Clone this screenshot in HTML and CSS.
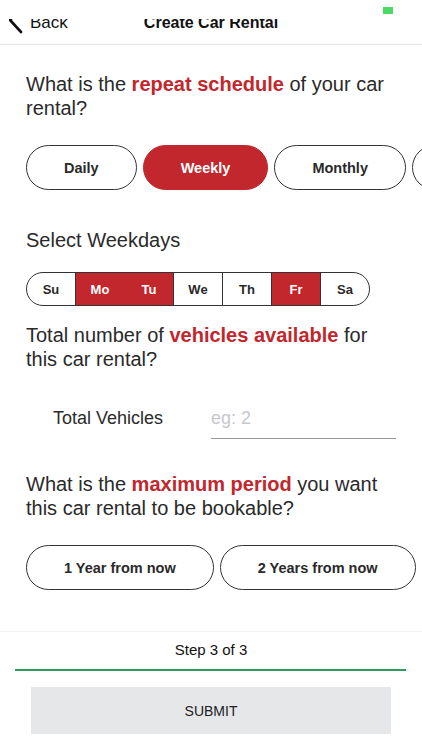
FILE: index.html
```html
<!DOCTYPE html>
<html lang="en">
  <head>
    <meta charset="utf-8" />
    <title>Create Car Rental</title>
    <link rel="stylesheet" href="styles.css">
  </head>

  <body>
    <!--Status strip, only the battery shows-->
    <div class="status">
      <div class="battery"></div>
    </div>

    <div class="nav">
      <div class="back">
        <svg class="chevron" width="14" height="16" viewBox="0 0 14 16">
          <polyline points="12,-11 1,1 12,13" fill="none" stroke="#111" stroke-width="2.6" stroke-linecap="round" stroke-linejoin="round"/>
        </svg>
        <span>Back</span>
      </div>
      <div class="title">Create Car Rental</div>
      <div></div>
    </div>

    <div class="content">
      <p class="question">What is the <b>repeat schedule</b> of your car rental?</p>

      <div class="pills first">
        <div class="pill">Daily</div>
        <div class="pill on">Weekly</div>
        <div class="pill">Monthly</div>
        <div class="pill">Yearly</div>
      </div>

      <p class="question weekTitle">Select Weekdays</p>

      <div class="days">
        <div class="day">Su</div>
        <div class="day on">Mo</div>
        <div class="day on">Tu</div>
        <div class="day">We</div>
        <div class="day">Th</div>
        <div class="day on">Fr</div>
        <div class="day">Sa</div>
      </div>

      <p class="question vehTitle">Total number of <b>vehicles available</b> for this car rental?</p>

      <div class="field">
        <label for="total">Total Vehicles</label>
        <input type="text" id="total" placeholder="eg: 2">
      </div>

      <p class="question periodTitle">What is the <b>maximum period</b> you want this car rental to be bookable?</p>

      <div class="pills">
        <div class="pill">1 Year from now</div>
        <div class="pill">2 Years from now</div>
      </div>
    </div>

    <!--Bottom step and submit button-->
    <div class="footer">
      <div class="step">Step 3 of 3</div>
      <div class="progress"></div>
      <div class="submit">SUBMIT</div>
    </div>
  </body>
</html>
```

FILE: styles.css
```css
body {margin: 0;
      font-family: "Liberation Sans", Arial, sans-serif;
      color: #2a2a2a;
      background-color: white;
      overflow: hidden;}

.status {height: 19px;
         display: flex;
         justify-content: flex-end;
         padding-right: 29px;}

.battery {width: 10px;
          height: 7px;
          margin-top: 7px;
          background-color: #4cd964;}

.nav {height: 25px;
      overflow: hidden;
      border-bottom: 1px solid #e6e6e6;
      display: grid;
      grid-template-columns: 1fr auto 1fr;
      color: #111;}

.back {display: flex;
       align-items: flex-start;
       padding-left: 9px;}

.chevron {flex: none;}

.back span {font-size: 17px;
            line-height: 17px;
            margin-top: -5px;
            margin-left: 7px;}

.title {font-size: 16px;
        font-weight: bold;
        line-height: 17px;
        margin-top: -5px;}

.content {padding: 0 26px;}

.question {font-size: 20px;
           line-height: 24px;
           margin: 27px 0 0 0;}

.question b {color: #c1272d;}

.weekTitle {margin-top: 38px;}
.vehTitle {margin-top: 17px;}
.periodTitle {margin-top: 33px;}

.pills {display: flex;
        gap: 6px;
        margin-right: -26px;
        overflow: hidden;
        margin-top: 25px;}

.pill {flex: none;
       box-sizing: border-box;
       height: 45px;
       padding: 0 37px;
       border: 1px solid #333;
       border-radius: 23px;
       display: flex;
       align-items: center;
       font-size: 14.5px;
       font-weight: bold;
       color: #2a2a2a;}

.pill.on {background-color: #c1272d;
          border-color: #c1272d;
          color: white;}

.days {display: flex;
       width: fit-content;
       margin-top: 20px;
       border: 1px solid #333;
       border-radius: 17px;
       overflow: hidden;}

.day {width: 48px;
      height: 32px;
      display: flex;
      align-items: center;
      justify-content: center;
      font-size: 13px;
      font-weight: bold;
      color: #2a2a2a;}

.day + .day {border-left: 1px solid #333;}

.day.on {background-color: #c1272d;
         color: white;}

.on + .on {border-left-color: #c1272d;}

.field {display: flex;
        margin-top: 36px;
        padding-left: 27px;}

.field label {width: 158px;
              font-size: 18px;
              line-height: 22px;}

.field input {width: 185px;
              box-sizing: border-box;
              border: none;
              border-bottom: 1px solid #999;
              padding: 0 0 9px 0;
              margin: 0;
              font-family: inherit;
              font-size: 18px;
              line-height: 22px;
              height: 32px;
              outline: none;}

.field input::placeholder {color: #c7c7cd;}

.footer {margin-top: 41px;
         border-top: 1px solid #f2f2f2;
         padding-top: 8px;}

.step {text-align: center;
       font-size: 15px;
       line-height: 20px;
       color: #111;}

.progress {height: 2px;
           margin: 9px 16px 0 15px;
           background-color: #2e9e5b;}

.submit {height: 47px;
         margin: 16px 31px 0 31px;
         background-color: #e6e7e9;
         display: flex;
         align-items: center;
         justify-content: center;
         font-size: 14px;
         color: #222;}
```
